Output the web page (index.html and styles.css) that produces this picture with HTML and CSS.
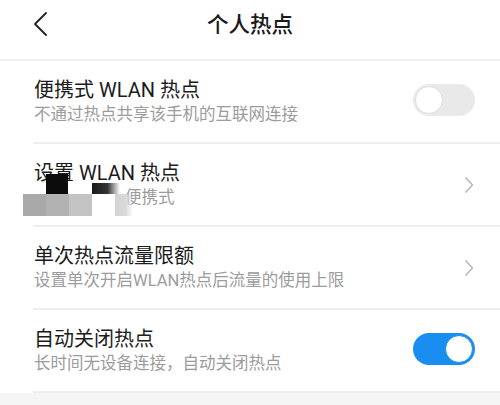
FILE: index.html
```html
<!DOCTYPE html>
<html lang="zh-CN">
<head>
<meta charset="utf-8">
<title>个人热点</title>
<link rel="stylesheet" href="styles.css">
</head>
<body>
<div class="page">
  <header class="header">
    <svg class="back" width="16" height="26" viewBox="0 0 16 26"><polyline points="13,2 2,13 13,24" fill="none" stroke="#222" stroke-width="1.8" stroke-linecap="round" stroke-linejoin="round"/></svg>
    <h1 class="title">个人热点</h1>
  </header>
  <div class="list">
    <div class="row">
      <div class="text">
        <div class="label">便携式 WLAN 热点</div>
        <div class="sub">不通过热点共享该手机的互联网连接</div>
      </div>
      <div class="switch"><span class="knob"></span></div>
    </div>
    <div class="row masked">
      <div class="text">
        <div class="label">设置 WLAN 热点</div>
        <div class="sub sub-offset">便携式</div>
      </div>
      <svg class="chev" width="10" height="18" viewBox="0 0 10 18"><polyline points="1.5,1.5 8.5,9 1.5,16.5" fill="none" stroke="#b4b4b4" stroke-width="1.4" stroke-linejoin="round"/></svg>
      <div class="mask">
        <span class="m m-black"></span>
        <span class="m m-dark"></span>
        <span class="m m-g1"></span>
        <span class="m m-g2"></span>
        <span class="m m-g3"></span>
        <span class="m m-g4"></span>
      </div>
    </div>
    <div class="row">
      <div class="text">
        <div class="label">单次热点流量限额</div>
        <div class="sub">设置单次开启WLAN热点后流量的使用上限</div>
      </div>
      <svg class="chev" width="10" height="18" viewBox="0 0 10 18"><polyline points="1.5,1.5 8.5,9 1.5,16.5" fill="none" stroke="#b4b4b4" stroke-width="1.4" stroke-linejoin="round"/></svg>
    </div>
    <div class="row">
      <div class="text">
        <div class="label">自动关闭热点</div>
        <div class="sub">长时间无设备连接，自动关闭热点</div>
      </div>
      <div class="switch on"><span class="knob"></span></div>
    </div>
  </div>
</div>
</body>
</html>
```
FILE: styles.css
```css
html, body {
  margin: 0;
  padding: 0;
}
body {
  background: #f5f5f5;
  font-family: Roboto, "Noto Sans CJK SC", "Noto Sans", sans-serif;
  width: 500px;
  height: 405px;
  overflow: hidden;
}
.page {
  background: #fff;
}
.header {
  height: 59px;
  border-bottom: 2px solid #f1f1f1;
  display: flex;
  align-items: center;
  justify-content: center;
  position: relative;
}
.back {
  position: absolute;
  left: 33px;
  top: 11px;
}
.title {
  margin: 0;
  font-size: 21.5px;
  font-weight: 500;
  color: #1a1a1a;
  line-height: 30px;
  margin-top: -10px;
}
.list {
  background: #fff;
}
.row {
  position: relative;
  height: 81px;
  margin-left: 33px;
  padding-right: 25px;
  border-bottom: 2px solid #eeeeee;
  display: flex;
  align-items: center;
  justify-content: space-between;
}
.text {
  display: flex;
  flex-direction: column;
  padding-left: 1px;
}
.label {
  font-size: 20px;
  line-height: 25px;
  color: #1c1c1c;
}
.sub {
  font-size: 16.5px;
  line-height: 22px;
  color: #9c9c9c;
  margin-top: 1px;
}
.sub-offset {
  padding-left: 91px;
}
.switch {
  width: 62px;
  height: 32px;
  border-radius: 16px;
  background: #e9e9e9;
  position: relative;
  margin-top: -4px;
}
.knob {
  position: absolute;
  left: 2px;
  top: 2px;
  width: 26px;
  height: 26px;
  border-radius: 50%;
  background: #fff;
  border: 1px solid #dedede;
}
.switch.on {
  background: #1a8ef0;
}
.switch.on .knob {
  left: auto;
  right: 2px;
  border-color: #1a8ef0;
}
.chev {
  margin-right: 1px;
}
.mask {
  position: absolute;
  left: 0;
  top: 0;
  width: 0;
  height: 0;
}
.m {
  position: absolute;
  display: block;
}
.m-black {
  left: 13px;
  top: 30px;
  width: 22px;
  height: 20px;
  background: #0c0c0c;
  filter: blur(0.6px);
}
.m-dark {
  left: 59px;
  top: 39px;
  width: 28px;
  height: 11px;
  background: linear-gradient(to right, #1a1a1a 0%, #333 55%, rgba(60,60,60,0) 100%);
}
.m-g1 {
  left: -10px;
  top: 50px;
  width: 23px;
  height: 22px;
  background: #a9a9a9;
}
.m-g2 {
  left: 13px;
  top: 50px;
  width: 23px;
  height: 22px;
  background: #b2b2b2;
}
.m-g3 {
  left: 36px;
  top: 50px;
  width: 23px;
  height: 22px;
  background: #c3c3c3;
}
.m-g4 {
  left: 82px;
  top: 50px;
  width: 18px;
  height: 22px;
  background: linear-gradient(to right, #d2d2d2 0%, #dadada 60%, rgba(230,230,230,0) 100%);
}
```
